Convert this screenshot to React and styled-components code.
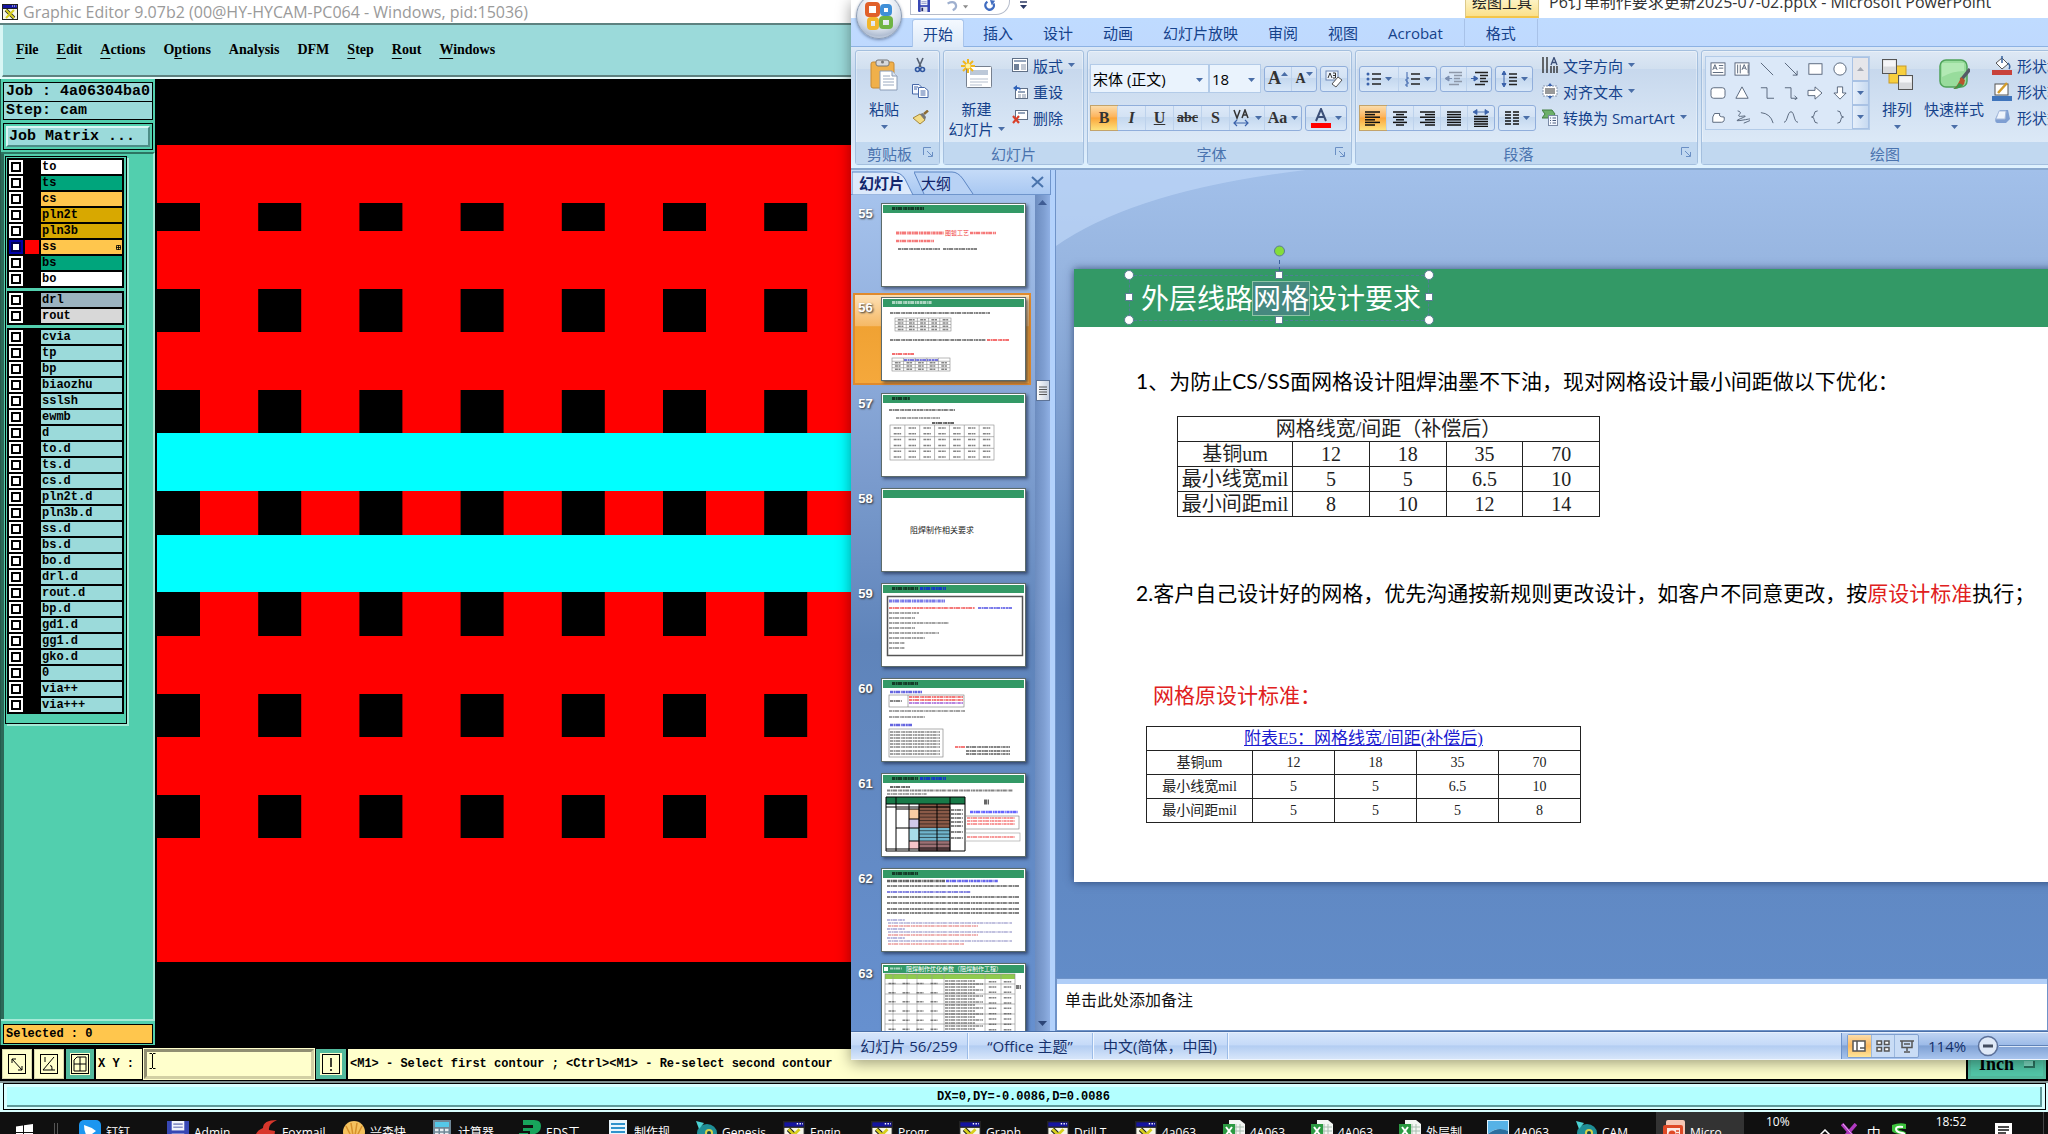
import React from "react";
import styled, { createGlobalStyle, css } from "styled-components";

const UI = `"Open Sans", "Noto Sans CJK SC", sans-serif`;
const MONO = `"Liberation Mono", monospace`;
const SLIDE = `"Liberation Sans Narrow", Lato, "Noto Sans CJK SC", sans-serif`;

const Global = createGlobalStyle`
  * { box-sizing: border-box; }
  html, body, #root { height: 100%; }
  body { margin: 0; overflow: hidden; background: #000; font-family: ${UI}; }
  button, input, select { font: inherit; color: inherit; margin: 0; padding: 0; border: 0; border-radius: 0; background: none; }
  svg { display: block; flex: none; }
`;

/* ---------- desktop ---------- */

const Desktop = styled.div`
  position: relative;
  display: flex;
  flex-direction: column;
  height: 100vh;
  overflow: hidden;
`;

/* ---------- graphic editor ---------- */

const Editor = styled.main`
  flex: 1;
  min-height: 0;
  display: flex;
  flex-direction: column;
`;
const EditorTitle = styled.header`
  height: 23px;
  display: flex;
  align-items: center;
  gap: 5px;
  padding-left: 2px;
  background: #fff;
  color: #9a9a9a;
  font-size: 16px;
  line-height: 22px;
  white-space: nowrap;
`;
const MenuBar = styled.nav`
  height: 56px;
  padding: 2px 0 2px 2px;
  background: linear-gradient(#5e8280 2px, #d8f6f4 2px, #d8f6f4 54px, #e6fbfa 54px);
`;
const MenuInner = styled.div`
  height: 100%;
  display: flex;
  align-items: center;
  gap: 18px;
  padding: 0 0 0 13px;
  background: #9bdada;
  border: solid #5e8280;
  border-width: 0 0 2px 0;
  border-left: 1px solid #d8f6f4;
`;
const MenuItem = styled.button`
  font: bold 14px/20px "Liberation Serif", serif;
  color: #000;
  u { text-underline-offset: 4px; }
`;
const Middle = styled.div`
  flex: 1;
  min-height: 0;
  display: flex;
  background: #000;
`;
const SidePanel = styled.aside`
  width: 157px;
  display: flex;
  flex-direction: column;
  background: #52cfae;
  border-left: 1px solid #245a4c;
  border-right: 2px solid #000;
  font-family: ${MONO};
  font-weight: bold;
  margin-bottom: 3px;
`;
const JobInfo = styled.dl`
  margin: 3px 2px 0 2px;
  border: 1px solid #000;
  background: #9bdada;
  font-size: 15px;
  line-height: 18px;
`;
const JobLine = styled.div`
  display: flex;
  height: 18px;
  padding-left: 2px;
  white-space: pre;
  & + & { border-top: 1px solid #000; }
  dt, dd { margin: 0; }
`;
const MatrixFrame = styled.div`
  margin: 3px 2px 0;
  padding: 2px;
  border: 1px solid #000;
`;
const MatrixButton = styled.button`
  display: block;
  width: 100%;
  height: 21px;
  padding-left: 1px;
  text-align: left;
  background: #9bdada;
  font-size: 15px;
  line-height: 17px;
  border: 2px solid;
  border-color: #d8f6f4 #4d8d87 #4d8d87 #d8f6f4;
`;
const LayerArea = styled.div`
  flex: 1;
  margin-top: 2px;
  padding: 2px 0 0 4px;
  border-top: 2px solid #2c7562;
  border-right: 2px solid #a5ead7;
  border-bottom: 2px solid #a5ead7;
  background: linear-gradient(90deg, #2c6858 3px, #52cfae 3px);
`;
const LayerFrame = styled.div`
  width: 122px;
  display: flex;
  flex-direction: column;
  gap: 3px;
  padding: 1px 2px 9px 1px;
  background: #52cfae;
  border: 1px solid #000;
  box-shadow: 2px 2px 0 #a5ead7;
`;
const LayerGroup = styled.ul`
  list-style: none;
  margin: 0;
  padding: 2px;
  display: flex;
  flex-direction: column;
  gap: 2px;
  background: #000;
`;
const LayerRow = styled.li`
  display: grid;
  grid-template-columns: 14px 14px 1fr;
  gap: 2px;
  height: 14px;
`;
const LayerCheck = styled.input`
  appearance: none;
  width: 14px;
  height: 14px;
  border: 2px solid #fff;
  background: #fff;
  box-shadow: inset 0 0 0 2px #000;
  &:checked { border-color: #0000a8; box-shadow: inset 0 0 0 2px #000050; }
`;
const Swatch = styled.span`
  background: ${(p) => p.$color || "#000"};
`;
const LayerName = styled.label`
  display: flex;
  justify-content: space-between;
  align-items: center;
  padding: 0 1px;
  background: ${(p) => p.$color};
  font-size: 12px;
  line-height: 14px;
  color: #000;
`;
const Selected = styled.output`
  margin: 3px 2px 1px;
  height: 20px;
  padding-left: 2px;
  border: 1px solid #000;
  background: #ffc64d;
  font-size: 12px;
  line-height: 18px;
`;
const Canvas = styled.svg`
  flex: 1;
  min-width: 0;
  height: 100%;
`;
const CommandBar = styled.div`
  height: 33px;
  display: flex;
  gap: 2px;
  padding: 1px 2px 2px;
  background: #000;
  font: bold 12px/30px ${MONO};
  color: #000;
`;
const ToolButton = styled.button`
  width: ${(p) => p.$w || 30}px;
  display: grid;
  place-items: center;
  background: #ffffcc;
  border: 1px solid #d8d8ac;
  ${(p) => p.$green && css`border: 4px solid #52b99c;`}
`;
const CoordLabel = styled.label`
  width: 46px;
  padding-left: 2px;
  background: #ffffcc;
  white-space: pre;
`;
const CoordField = styled.div`
  position: relative;
  display: flex;
  svg { position: absolute; left: 5px; top: 4px; pointer-events: none; }
`;
const CoordInput = styled.input`
  width: 170px;
  background: #ffffcc;
  padding: 0 4px;
  border: 3px solid;
  border-color: #918f72 #d2d0a4 #d2d0a4 #918f72;
  outline: 1px solid #ffffcc;
`;
const Message = styled.p`
  flex: 1;
  margin: 0;
  padding-left: 2px;
  background: #ffffcc;
`;
const UnitButton = styled.button`
  width: 78px;
  display: flex;
  align-items: center;
  justify-content: center;
  gap: 10px;
  background: #52c7a8;
  border: 2px solid;
  border-color: #a5ead7 #2c7562 #2c7562 #a5ead7;
  outline: 3px solid #52b99c;
  outline-offset: -3px;
  font: bold 18px/20px "Liberation Serif", serif;
`;
const CoordStatus = styled.div`
  height: 31px;
  padding: 2px 2px 2px 3px;
  background: linear-gradient(#7f9090 2px, #d8ffff 2px);
  div {
    height: 27px;
    border: 1px solid #000;
    padding: 3px 3px 2px;
    background: #d8ffff;
  }
  p {
    margin: 0;
    height: 20px;
    border-bottom: 2px solid #5f9a9a;
    border-right: 2px solid #5f9a9a;
    background: #b3ffff;
    text-align: center;
    font: bold 12px/20px ${MONO};
  }
`;

/* ---------- presentation window ---------- */

const PptWindow = styled.section`
  position: absolute;
  left: 851px;
  right: 0;
  top: 0;
  bottom: 74px;
  display: flex;
  flex-direction: column;
  overflow: hidden;
  background: #bfdbff;
  color: #15428b;
  font-size: 15px;
`;
const WindowShadow = styled.div`
  position: absolute;
  left: 851px;
  right: 0;
  top: 0;
  bottom: 74px;
  box-shadow: 0 3px 14px rgba(0, 0, 0, 0.4);
`;
const PptTitle = styled.header`
  height: 18px;
  display: flex;
  align-items: flex-end;
  background: #fff;
  overflow: hidden;
  white-space: nowrap;
  color: #222;
`;
const QuickAccess = styled.div`
  width: 100px;
  height: 15px;
  margin: 0 0 3px 59px;
  padding: 0 12px 0 7px;
  display: flex;
  align-items: flex-start;
  justify-content: space-between;
  border: 1px solid #b5bccb;
  border-top: 0;
  border-radius: 0 0 14px 0;
  align-self: flex-start;
`;
const IconButton = styled.button`
  display: grid;
  place-items: center;
`;
const ContextTitle = styled.span`
  width: 74px;
  height: 18px;
  margin-left: auto;
  display: flex;
  align-items: flex-end;
  justify-content: center;
  line-height: 28px;
  background: linear-gradient(#fdf3c4, #fbe08a);
  border: solid #dcc98a;
  border-width: 0 1px;
  border-bottom: 2px solid #f3c54a;
`;
const WindowCaption = styled.h1`
  width: 509px;
  margin: 0;
  padding-left: 10px;
  font-size: 16px;
  font-weight: 400;
  line-height: 32px;
  color: #333;
`;
const TabRow = styled.nav`
  height: 29px;
  padding: 1px 0 0 61px;
  display: flex;
  background: linear-gradient(#bfdbff, #bfd9fe);
  border-bottom: 1px solid #8db2e3;
`;
const RibbonTab = styled.button`
  padding: 0 15px;
  margin-bottom: -1px;
  line-height: 26px;
  white-space: nowrap;
  ${(p) =>
    p.$active &&
    css`
      padding: 0 10px;
      margin-right: 4px;
      background: linear-gradient(#f4f9ff, #dde9f7);
      border: 1px solid #a9c5ec;
      border-bottom: 0;
      border-radius: 3px 3px 0 0;
    `}
  ${(p) =>
    p.$context &&
    css`
      margin-left: 6px;
      width: 74px;
      padding: 0;
      border: solid #a8c2e8;
      border-width: 0 1px;
    `}
`;
const OfficeOrb = styled.button`
  position: absolute;
  left: 5px;
  top: -7px;
  width: 46px;
  height: 46px;
  display: grid;
  place-items: center;
  border-radius: 50%;
  border: 1px solid #8c9db5;
  background: radial-gradient(circle at 50% 30%, #fff 20%, #d5dde9 60%, #b2bfd3 75%, #eef3fa 100%);
  box-shadow: 0 1px 3px rgba(40, 60, 100, 0.5);
`;
const Ribbon = styled.div`
  height: 123px;
  display: flex;
  gap: 3px;
  padding: 3px 4px 3px;
  background: linear-gradient(#dbe7f6, #c9dbf0 20%, #d9e8f8 80%, #dff2ff);
  border-bottom: 2px solid #8aa9cf;
  overflow: hidden;
`;
const Group = styled.section`
  flex: none;
  width: ${(p) => p.$w}px;
  display: flex;
  flex-direction: column;
  border: 1px solid #a4bfde;
  border-radius: 3px;
  background: linear-gradient(#dee8f5 0, #d1dfef 18px, #c7d8ed 18px, #dce9f7 92px);
  box-shadow: inset 0 0 0 1px rgba(255, 255, 255, 0.35);
`;
const GroupBody = styled.div`
  flex: 1;
  display: flex;
  padding: ${(p) => p.$pad || "0"};
  gap: ${(p) => p.$gap || 0}px;
`;
const GroupLabel = styled.h2`
  position: relative;
  margin: 0;
  height: 22px;
  padding-right: ${(p) => (p.$launch ? 16 : 0)}px;
  text-align: center;
  font-size: 15px;
  font-weight: 400;
  line-height: 24px;
  color: #4a73ae;
  background: #c1d8f0;
  svg { position: absolute; right: 5px; top: 5px; }
`;
const BigButton = styled.button`
  flex: none;
  width: ${(p) => p.$w}px;
  display: flex;
  flex-direction: column;
  align-items: center;
  padding-top: 8px;
  line-height: 20px;
  white-space: nowrap;
  svg { margin-bottom: 8px; }
  svg + span { min-height: 20px; }
`;
const CaretSlot = styled.span`
  height: 16px;
  display: grid;
  place-items: center;
  svg { margin: 0; }
`;
const InlineCaret = styled.span`
  display: flex;
  align-items: center;
  gap: 4px;
  svg { margin: 0; }
`;
const Stack = styled.div`
  display: flex;
  flex-direction: column;
  align-items: flex-start;
  padding-top: 1px;
`;
const SmallButton = styled.button`
  height: 26px;
  display: flex;
  align-items: center;
  gap: 5px;
  white-space: nowrap;
`;
const Rows = styled.div`
  display: flex;
  flex-direction: column;
  gap: 12px;
  padding-top: 13px;
`;
const Row = styled.div`
  display: flex;
  align-items: center;
  height: 29px;
  gap: 3px;
  & + & { height: 26px; }
`;
const Combo = styled.div`
  position: relative;
  width: ${(p) => p.$w}px;
  height: 29px;
  border: 1px solid #b3cbe8;
  background: #eaf3fd;
  & + & { margin-left: -3px; }
  select {
    appearance: none;
    width: 100%;
    height: 100%;
    padding-left: 2px;
    font-size: 15px;
    color: #000;
  }
  svg { position: absolute; right: 5px; top: 13px; pointer-events: none; }
`;
const Cluster = styled.div`
  display: flex;
  height: 26px;
  border: 1px solid #90aedb;
  border-radius: 3px;
  background: linear-gradient(#dde9f8 0, #d3e2f4 45%, #c3d7ee 45%, #d8e7f8);
`;
const Tool = styled.button`
  width: ${(p) => p.$w}px;
  display: flex;
  align-items: center;
  justify-content: center;
  gap: ${(p) => (p.$tight ? 0 : 4)}px;
  color: #333;
  font-family: "Liberation Serif", serif;
  font-weight: bold;
  font-size: ${(p) => p.$size || 16}px;
  ${(p) => p.$tight && css`svg { align-self: flex-start; margin-top: 5px; }`}
  & + & { border-left: 1px solid #bdd2ec; }
  ${(p) =>
    p.$on &&
    css`
      background: linear-gradient(#fbdcaa, #fdb45c 45%, #fba63c 50%, #fde27c);
      outline: 1px solid #c2a36b;
    `}
`;
const Gallery = styled.div`
  flex: none;
  width: 165px;
  height: 74px;
  margin: 5px 8px 0 3px;
  display: flex;
  border: 1px solid #b3cbe8;
  background: #dbe8f8;
`;
const ShapeGrid = styled.div`
  flex: 1;
  display: grid;
  grid-template-columns: repeat(6, 1fr);
  place-items: center;
`;
const GalleryNav = styled.div`
  width: 17px;
  display: grid;
  button {
    display: grid;
    place-items: center;
    border: 1px solid #a9c2e4;
    background: linear-gradient(90deg, #e6effa, #c7daf1);
  }
  button:first-child { background: #e6e6ea; }
`;
const Work = styled.div`
  flex: 1;
  min-height: 0;
  display: flex;
  border-bottom: 1px solid #4a6fa8;
`;
const SlidePanel = styled.aside`
  width: 200px;
  display: flex;
  flex-direction: column;
  background: linear-gradient(#a9c6ef 0, #8eacdb 22%, #5f84ba 55%, #6690cf 100%);
`;
const PanelTabs = styled.div`
  height: 25px;
  display: flex;
  align-items: center;
  padding: 0 6px 0 8px;
  background: linear-gradient(#c5dbf8, #a9c8f2);
  border-bottom: 1px solid #6f95cc;
  border-right: 1px solid #6f95cc;
`;
const PanelTab = styled.button`
  position: relative;
  height: 25px;
  line-height: 26px;
  margin-right: 17px;
  color: #10246b;
  font-weight: ${(p) => (p.$active ? "bold" : "normal")};
  svg { position: absolute; left: -7px; top: 0; z-index: 0; }
  span { position: relative; }
`;
const PanelClose = styled.button`
  margin-left: auto;
  display: grid;
`;
const PanelBody = styled.div`
  flex: 1;
  min-height: 0;
  display: flex;
`;
const ThumbList = styled.ol`
  list-style: none;
  flex: 1;
  margin: 0;
  padding: 3px 0 0 2px;
  overflow: hidden;
`;
const ThumbItem = styled.li`
  height: 95px;
  display: flex;
  padding: 4px;
  gap: 8px;
  width: 178px;
  border: 1px solid transparent;
  ${(p) =>
    p.$active &&
    css`
      height: 92px;
      margin-bottom: 3px;
      border: 2px solid #e08a2c;
      padding: 2px 3px;
      background: linear-gradient(#fde0b4, #f5b966 35%, #f0a233 36%, #f5a83c);
    `}
`;
const ThumbNo = styled.span`
  width: 19px;
  text-align: center;
  color: #fff;
  font: bold 13px/22px "Liberation Sans", sans-serif;
  text-shadow: 1px 1px 2px #333;
`;
const Thumb = styled.svg`
  width: 145px;
  height: 84px;
  background: #fff;
  border: 1px solid #5c6b6b;
  box-shadow: 2px 2px 3px rgba(20, 30, 60, 0.6);
  font-family: "Noto Sans CJK SC", sans-serif;
`;
const Scroll = styled.div`
  width: 16px;
  display: flex;
  flex-direction: column;
  align-items: center;
  background: linear-gradient(90deg, #6c8cbf, #7f9fd2 60%, #8fb0e4);
  border-right: 1px solid #b5d2fa;
  padding: 5px 0;
`;
const ScrollThumb = styled.div`
  width: 14px;
  height: 21px;
  margin-top: 175px;
  margin-bottom: auto;
  display: grid;
  place-items: center;
  border: 1px solid #5d7396;
  background: linear-gradient(90deg, #fafafa, #c9d3e2);
`;
const Splitter = styled.div`
  width: 5px;
  background: #b3d2fc;
  border-right: 1px solid #6f93c8;
`;
const EditPane = styled.div`
  flex: 1;
  min-width: 0;
  display: flex;
  flex-direction: column;
`;
const Stage = styled.div`
  position: relative;
  flex: 1;
  min-height: 0;
  padding: 99px 0 0 18px;
  overflow: hidden;
  background: linear-gradient(#a2c0ea 0, #97b5e0 12%, #5b80b8 55%, #628cc8 100%);
`;
const Swoosh = styled.svg`
  position: absolute;
  left: 0;
  top: 0;
`;
const Slide = styled.article`
  position: relative;
  width: 1090px;
  height: 613px;
  background: #fff;
  color: #000;
  font-family: ${SLIDE};
  font-size: 21px;
  line-height: 30px;
  box-shadow: 0 0 8px rgba(20, 40, 80, 0.7);
  white-space: nowrap;
`;
const SlideHead = styled.div`
  height: 58px;
  padding: 6px 0 0 55px;
  background: #339966;
`;
const TitleBox = styled.h3`
  position: relative;
  width: 300px;
  height: 46px;
  margin: 0;
  padding: 6px 0 0 11px;
  border: 1px dashed #4f7f96;
  color: #fff;
  font-weight: 400;
  font-size: 28px;
  line-height: 33px;
  mark {
    color: #fff;
    background: #46887f;
    outline: 1px solid #8fc4a6;
    display: inline-block;
  }
`;
const Handles = styled.svg`
  position: absolute;
  left: -6px;
  top: -36px;
  overflow: visible;
`;
const SlideText = styled.p`
  margin: 0;
  padding-left: ${(p) => p.$indent}px;
  margin-top: ${(p) => p.$top}px;
  color: ${(p) => (p.$red ? "#e02020" : "#000")};
  em { font-style: normal; color: #e02020; }
`;
const SpecTable = styled.table`
  table-layout: fixed;
  border-collapse: collapse;
  margin: ${(p) => p.$m};
  width: ${(p) => p.$w}px;
  font-family: "Liberation Serif", "Noto Sans CJK SC", serif;
  font-size: ${(p) => p.$size}px;
  color: #222;
  th, td {
    border: 1px solid #222;
    padding: 0;
    height: ${(p) => p.$row}px;
    line-height: ${(p) => p.$row - 1}px;
    text-align: center;
    font-weight: 400;
  }
  thead th { font-size: ${(p) => p.$head}px; }
  a { color: #1a1ad0; }
`;
const FirstCol = styled.col`
  width: ${(p) => p.$w}px;
`;
const Notes = styled.label`
  height: 53px;
  padding: 0;
  display: block;
  border-top: 6px solid #b0cef8;
  outline: 1px solid #6f93c8;
  outline-offset: -1px;
  background: #fff;
  color: #000;
  input { width: 100%; height: 32px; padding-left: 9px; font-size: 16px; }
  input::placeholder { color: #111; opacity: 1; }
`;
const StatusBar = styled.footer`
  height: 28px;
  display: flex;
  align-items: center;
  border-top: 1px solid #e6effc;
  border-bottom: 1px solid #eef4fd;
  background: linear-gradient(#d7e6fb, #c5daf8 45%, #b3cdf2 50%, #d7e6fa);
  color: #15306b;
  white-space: nowrap;
`;
const StatusCell = styled.span`
  height: 26px;
  width: ${(p) => p.$w}px;
  text-align: center;
  line-height: 26px;
  border-right: 1px solid #9bbce8;
  box-shadow: 1px 0 0 #f0f6ff;
`;
const StatusRight = styled.div`
  width: 207px;
  height: 26px;
  margin-left: auto;
  padding-left: 5px;
  display: flex;
  align-items: center;
  gap: 9px;
  overflow: hidden;
  border-left: 1px solid #6d92c9;
  background: linear-gradient(#bed3f2, #9dbbe8 45%, #7fa1d4 50%, #a9c5ee);
`;
const ViewButtons = styled.div`
  flex: none;
  display: flex;
  width: 72px;
  height: 24px;
  border: 1px solid #7f9fcf;
  border-radius: 2px;
  background: #c9dcf5;
  button {
    flex: 1;
    display: grid;
    place-items: center;
  }
  button + button { border-left: 1px solid #9cb8de; }
  button:first-child { background: linear-gradient(#fbdcaa, #fdb95c 50%, #fee69a); }
`;
const ZoomText = styled.span`
  width: 40px;
  flex: none;
`;
const ZoomControl = styled.div`
  display: flex;
  align-items: center;
  flex: none;
`;
const ZoomRange = styled.input`
  appearance: none;
  width: 200px;
  height: 2px;
  background: #5f82b8;
  border-bottom: 1px solid #dbe7f8;
  &::-webkit-slider-thumb { appearance: none; width: 8px; height: 14px; background: #dce8f8; }
`;

/* ---------- taskbar ---------- */

const Taskbar = styled.nav`
  position: relative;
  height: 22px;
  display: flex;
  overflow: hidden;
  background: #101010;
  color: #fff;
  font-size: 12px;
  white-space: nowrap;
`;
const StartButton = styled.button`
  width: 54px;
  height: 40px;
  padding-left: 16px;
  display: flex;
  align-items: center;
`;
const Grip = styled.span`
  width: 18px;
  height: 40px;
  display: flex;
  gap: 2px;
  align-items: center;
  &::before, &::after { content: ""; width: 1px; height: 18px; background: #555; }
`;
const Task = styled.button`
  flex: none;
  width: 88px;
  height: 40px;
  padding-left: 7px;
  display: flex;
  align-items: center;
  gap: 5px;
  background: ${(p) => (p.$active ? "#333" : "transparent")};
`;
const Tray = styled.div`
  margin-left: auto;
  width: 278px;
  height: 40px;
  display: flex;
  align-items: center;
  gap: 29px;
  border-right: 1px solid #444;
  margin-right: 4px;
`;
const TrayText = styled.span`
  height: 40px;
  line-height: 20px;
`;
const TrayIcons = styled.div`
  display: flex;
  align-items: center;
  gap: 10px;
  span { font-size: 14px; }
`;

/* ---------- icons ---------- */

const Caret = ({ up, c = "#4a6ea8" }) => (
  <svg width="7" height="4" viewBox="0 0 7 4"><path d={up ? "M0 4L3.500 0L7 4Z" : "M0 0H7L3.500 4Z"} fill={c} /></svg>
);
const Launcher = () => (
  <svg width="11" height="11" viewBox="0 0 11 11" fill="none" stroke="#6a8fc4">
    <path d="M.5 8V.5H8" /><path d="M4 4L9 9M9.500 5v4.500H5" />
  </svg>
);
const XWin = ({ s = 16 }) => (
  <svg width={s} height={s} viewBox="0 0 16 16">
    <rect width="16" height="16" fill="#222" /><rect x="1" y="1" width="14" height="3" fill="#1414a0" />
    <path d="M10 2h1M12 2h1M14 2h.5" stroke="#fff" />
    <rect x="1" y="5" width="14" height="10" fill="#f6f6e8" />
    <path d="M4 6L12 14" stroke="#222" strokeWidth="3.500" /><path d="M4 6L12 14M12 6L4 14" stroke="#d8cf1e" strokeWidth="2" />
  </svg>
);
const Lines = ({ rows, w = 16, c = "#111" }) => (
  <svg width={w} height="16" viewBox={`0 0 ${w} 16`} stroke={c} strokeWidth="1.500">
    {rows.map(([x1, x2], i) => <path key={i} d={`M${x1} ${2 + i * 2.6}H${x2}`} />)}
  </svg>
);
const PasteIcon = () => (
  <svg width="28" height="32" viewBox="0 0 28 32">
    <rect x="1" y="3" width="23" height="26" rx="2" fill="#f0b04a" stroke="#c88a32" />
    <rect x="6" y="1" width="13" height="6" rx="2" fill="#d7d9dc" stroke="#777" /><circle cx="12.500" cy="3" r="1.500" fill="#777" />
    <path d="M10 12h12l5 5v14H10Z" fill="#fff" stroke="#8a9bb5" /><path d="M22 12v5h5" fill="#dbe4f0" stroke="#8a9bb5" />
    <path d="M13 17h7M13 20h11M13 23h11M13 26h11" stroke="#9aa9c0" />
  </svg>
);
const CutIcon = () => (
  <svg width="16" height="16" viewBox="-1 0 16 16" fill="none">
    <path d="M4 1L8 10M10 1L6 10" stroke="#555f70" strokeWidth="1.600" />
    <circle cx="4.500" cy="12.500" r="2" stroke="#2f56a0" strokeWidth="1.600" /><circle cx="9.500" cy="12.500" r="2" stroke="#2f56a0" strokeWidth="1.600" />
  </svg>
);
const CopyIcon = () => (
  <svg width="17" height="14" viewBox="0 0 17 14" stroke="#4668a8">
    <path d="M.5.5H7l3 3V10H.5Z" fill="#f4f8ff" /><path d="M6.500 3.500h6l3.500 3V13.500H6.500Z" fill="#fff" />
    <path d="M2 3h4M2 5h3M8.500 7h5M8.500 9h5M8.500 11h5" />
  </svg>
);
const BrushIcon = () => (
  <svg width="18" height="15" viewBox="0 0 18 15">
    <path d="M1 8l7-4 5 6-5 4Z" fill="#f3dc86" stroke="#a4873a" /><path d="M8 4l3-1 3 4-1 3Z" fill="#777" /><path d="M12 4l4-3.500" stroke="#8c6b32" strokeWidth="2.400" />
  </svg>
);
const NewSlideIcon = () => (
  <svg width="32" height="32" viewBox="0 0 32 32">
    <rect x="5.500" y="7.500" width="25" height="21" rx="1" fill="#fff" stroke="#76808f" />
    <rect x="9" y="11" width="18" height="5" fill="#bcc8d8" /><path d="M9 20h18M9 23h18M9 26h12" stroke="#b5bfce" />
    <path d="M7 0v14M0 7h14M2 2l10 10M12 2L2 12" stroke="#f0b71e" strokeWidth="2" /><circle cx="7" cy="7" r="2.500" fill="#fff3a0" />
  </svg>
);
const LayoutIcon = () => (
  <svg width="16" height="14" viewBox="0 0 16 14"><rect x=".5" y=".5" width="15" height="13" fill="#fff" stroke="#5f6f86" /><rect x="2" y="2" width="12" height="2" fill="#93a3ba" /><rect x="2" y="6" width="5" height="6" fill="#6f8098" /><path d="M9 7h5M9 9h5M9 11h5" stroke="#8492a8" /></svg>
);
const ResetIcon = () => (
  <svg width="16" height="15" viewBox="0 0 16 15"><rect x="3.500" y="4.500" width="12" height="10" fill="#fff" stroke="#5f6f86" /><path d="M6 8h7" stroke="#93a3ba" strokeWidth="2" /><path d="M6 11h3M10 11h4M6 13h3M10 13h4" stroke="#8492a8" /><path d="M1 4l4-3v2c4 0 4 2 3 4-.5-2-1-2-3-2v2Z" fill="#2f62b8" /></svg>
);
const DeleteIcon = () => (
  <svg width="16" height="14" viewBox="0 0 16 14"><rect x="3.500" y=".5" width="12" height="9" fill="#fff" stroke="#5f6f86" /><path d="M6 3h7" stroke="#93a3ba" strokeWidth="2" /><path d="M1 6l6 7M7 6l-6 7" stroke="#d9402a" strokeWidth="2.200" /></svg>
);
const Bullets = ({ num }) => (
  <svg width="15" height="16" viewBox="0 0 15 16">
    {[3, 8, 13].map((y, i) => (
      <g key={y}>
        {num ? <path d={i === 0 ? "M2 1v4" : `M1 ${y - 2}h2v2h-2v2h2`} stroke="#3b62aa" fill="none" /> : <circle cx="2" cy={y} r="1.500" fill="#3b62aa" />}
        <path d={`M6 ${y}H15`} stroke="#222" strokeWidth="1.500" />
      </g>
    ))}
  </svg>
);
const Indent = ({ dir }) => (
  <svg width="17" height="16" viewBox="0 0 17 16" stroke={dir ? "#222" : "#8d97a8"} strokeWidth="1.500">
    <path d="M4 1.500H17M9 4.500h8M9 7.500h6M9 10.500h8M4 13.500H14" />
    {dir ? <path d="M0 7.500h3V5l4 2.500L3 10V7.500" fill="#3b62aa" stroke="#3b62aa" strokeWidth="1" /> : <path d="M7 7.500H4V5L0 7.500 4 10V7.500" fill="#7c8fb0" stroke="#7c8fb0" strokeWidth="1" />}
  </svg>
);
const Spacing = () => (
  <svg width="16" height="18" viewBox="0 0 16 18"><path d="M3 2v14M3 1L1 4.500h4ZM3 17l-2-3.500h4Z" stroke="#3b62aa" fill="#3b62aa" /><path d="M8 4h8M8 7.500h8M8 11h8M8 14.500h8" stroke="#222" strokeWidth="1.300" /></svg>
);
const Columns = () => (
  <svg width="14" height="14" viewBox="0 0 14 14" stroke="#111" strokeWidth="1.500">{[1, 4, 7, 10, 13].map((y) => <path key={y} d={`M0 ${y}h6M8 ${y}h6`} />)}</svg>
);
const Distribute = () => (
  <svg width="16" height="18" viewBox="0 0 16 18"><path d="M2 3h12M0 3l4-2.500v5ZM16 3l-4-2.500v5Z" stroke="#3b62aa" fill="#3b62aa" strokeWidth=".8" /><path d="M1 7.500h14M1 10h14M1 12.500h14M1 15h14M1 17.300h14" stroke="#111" strokeWidth="1.300" /></svg>
);
const TextDir = () => (
  <svg width="16" height="16" viewBox="0 0 16 16" stroke="#222" strokeWidth="1.300" fill="none"><path d="M1 0v16M5 0v16M9 9v7M12 9v7M15 9v7" /><path d="M9 8l3-7.500L15 8M10 5.500h4" stroke="#3b4f78" /></svg>
);
const AlignText = () => (
  <svg width="16" height="16" viewBox="0 0 16 16"><rect x="1" y="3" width="14" height="10" fill="#fff" stroke="#8695ad" strokeDasharray="2 1" /><path d="M3 6h10M3 8h10M3 10h10" stroke="#333" /><path d="M8 0l-2.500 3h5ZM8 16l-2.500-3h5Z" fill="#3b62aa" /></svg>
);
const SmartArt = () => (
  <svg width="16" height="17" viewBox="0 0 16 17"><path d="M0 1h10l3 4-3 4H0l3-4Z" fill="#6db06a" stroke="#447f42" /><rect x="6.500" y="6.500" width="9" height="10" fill="#f4f8ff" stroke="#7a8aa5" /><path d="M8 9h1M10.500 9H14M8 11.500h1M10.500 11.500H14M8 14h1M10.500 14H14" stroke="#4a5c7c" /></svg>
);
const Arrange = () => (
  <svg width="31" height="32" viewBox="0 0 31 32"><rect x="7" y="7" width="17" height="17" fill="#f7cf3e" stroke="#c99b28" /><rect x=".5" y=".5" width="14" height="14" fill="#d9dadd" stroke="#555" /><rect x="1.500" y="1.500" width="12" height="6" fill="#f5f5f7" /><rect x="16.500" y="16.500" width="14" height="14" fill="#d9dadd" stroke="#555" /><rect x="17.500" y="17.500" width="12" height="6" fill="#f5f5f7" /></svg>
);
const QuickStyle = () => (
  <svg width="31" height="32" viewBox="0 0 31 32"><rect x="1" y="1" width="27" height="27" rx="6" fill="#98dc9c" stroke="#4fa35a" strokeWidth="1.500" /><path d="M3 4h22v8q-12 0-22 6Z" fill="#bdeebf" opacity=".7" /><path d="M31 10l-9 11" stroke="#555c66" strokeWidth="3.500" /><path d="M22 18l4 3q0 8-12 9 5-3 8-12Z" fill="#b9542c" /><path d="M20 24l4 2q-3 4-10 4 4-2 6-6Z" fill="#3c9a4a" /></svg>
);
const FillIcon = ({ kind }) => (
  <svg width="20" height="19" viewBox="0 0 20 19">
    {kind === 0 && <><path d="M4 7l6-5 6 6-6 5Z" fill="#fff" stroke="#555" /><path d="M10 0v7M16 7q3 3 1 6" stroke="#38639f" strokeWidth="1.500" fill="none" /><rect y="14" width="20" height="5" fill="#c8423b" /></>}
    {kind === 1 && <><rect x="3" y="2" width="13" height="11" fill="#fff" stroke="#555" /><path d="M6 11l9-10" stroke="#d39c2b" strokeWidth="2.500" /><rect y="14" width="20" height="5" fill="#3f74bb" /></>}
    {kind === 2 && <><path d="M8 2h8l2 9-4 4H5Q2 14 4 9Z" fill="#7f9fd2" /><path d="M7 3h7l-1 8H4Z" fill="#eef4fc" stroke="#a9bcdc" /></>}
  </svg>
);
const shapes = [
  <g key="a"><rect x="1" y="1" width="16" height="14" fill="#fff" /><path d="M3 9l2.500-6L8 9M4 7h3M10 4h5M10 7h5M3 12h12" /></g>,
  <g key="b"><rect x="1" y="1" width="16" height="14" fill="#fff" /><path d="M9 9l2.500-6L14 9M10 7h3M4 3v10M7 3v10M16 3v10" /></g>,
  <path key="c" d="M2 1l14 14" />,
  <path key="d" d="M2 1l14 14M16 10v5h-5" />,
  <rect key="e" x="2" y="2" width="15" height="12" fill="#fff" />,
  <circle key="f" cx="9" cy="8" r="7" fill="#fff" />,
  <rect key="g" x="1" y="2" width="16" height="12" rx="3" fill="#fff" />,
  <path key="h" d="M9 1l7 13H2Z" fill="#fff" />,
  <path key="i" d="M2 2h7v12h8" />,
  <path key="j" d="M2 2h7v12h7M13 11l3 3-3 2" />,
  <path key="k" d="M1 5h8V1l8 7-8 7v-4H1Z" fill="#fff" />,
  <path key="l" d="M6 1v7H2l7 7 7-7h-4V1Z" fill="#fff" />,
  <path key="m" d="M5 4h6q-2 4 5 4 1 6-3 6H3V8Z" fill="#fff" />,
  <path key="n" d="M4 1q5 1 2 4t4 2-3 3 6 1-2 4" />,
  <path key="o" d="M2 3q11 1 14 12" />,
  <path key="p" d="M1 14C5 14 5 2 9 2s3 12 8 12" />,
  <path key="q" d="M12 1q-4 0-4 4 0 3-3 3 3 0 3 3 0 4 4 4" />,
  <path key="r" d="M6 1q4 0 4 4 0 3 3 3-3 0-3 3 0 4-4 4" />,
];
const OfficeLogo = () => (
  <svg width="30" height="32" viewBox="0 0 30 32" fill="none" strokeWidth="4">
    <rect x="3" y="4" width="11" height="11" rx="2" stroke="#e0602a" /><rect x="18" y="6" width="8" height="8" rx="2" stroke="#3f8fd8" />
    <rect x="5" y="19" width="8" height="9" rx="2" stroke="#f2b62c" /><rect x="17" y="18" width="10" height="9" rx="2" stroke="#6fb444" />
  </svg>
);
const Floppy = ({ s = 14 }) => (
  <svg width={s} height={s} viewBox="0 0 14 14"><path d="M0 0h14v14H1L0 13Z" fill="#3747b4" /><rect x="3" width="8" height="6" fill="#f2f4fb" /><path d="M4 2h6M4 4h6" stroke="#8b93c8" /><rect x="3" y="8" width="8" height="6" fill="#dfe2f0" /><rect x="4" y="9" width="2" height="4" fill="#222a66" /></svg>
);

const TaskIcon = ({ kind }) => {
  if (kind === "x") return <XWin s={22} />;
  if (kind === "floppy") return <Floppy s={22} />;
  return (
    <svg width="22" height="24" viewBox="0 0 22 24">
      {kind === "ding" && <><rect width="22" height="24" rx="5" fill="#1d96f0" /><path d="M5 5q7 2 12 6l-4 3 2 1-6 7 1-5-2-1q-3-4-3-11Z" fill="#fff" /></>}
      {kind === "fox" && <path d="M22 0Q8 0 8 8-2 12 1 22q4-8 9-8l1 6 8-1 1-8-6-1Q13 4 22 0Z" fill="#d8372c" />}
      {kind === "shell" && <><circle cx="11" cy="12" r="11" fill="#f5c25e" /><path d="M11 22L3 6M11 22L8 3M11 22l3-19M11 22l8-16" stroke="#d6902b" strokeWidth="1.500" /></>}
      {kind === "calc" && <><rect x="2" width="18" height="24" fill="#6f8796" /><rect x="4" y="2" width="14" height="5" fill="#54c8e8" /><path d="M4 10h14M4 14h14M4 18h14" stroke="#e8eef2" strokeWidth="2.500" strokeDasharray="3.500 1.500" /></>}
      {kind === "eds" && <path d="M4 0h11q7 0 7 6t-6 8h-5v-3H4V8h10V5H4ZM0 13h9v3H0ZM3 18h17v3H3Z" fill="#18a45c" />}
      {kind === "doc" && <><rect x="2" width="18" height="24" fill="#e9f6fd" /><path d="M4 4h14M4 8h14M4 12h14M4 16h14M4 20h10" stroke="#2f93cc" strokeWidth="2" /></>}
      {kind === "gen" && <><ellipse cx="12" cy="13" rx="10" ry="9" fill="#1f8e96" /><circle cx="14" cy="13" r="4" fill="#d6d34a" /><circle cx="14" cy="13" r="2" fill="#12464e" /><path d="M1 1l8 2-5 6Z" fill="#4bd2d2" /></>}
      {kind === "xls" && <><path d="M6 0h11l5 4v20H6Z" fill="#f3f6f3" /><path d="M9 7h12M9 11h12M9 15h12M13 4v18M17 4v18" stroke="#a9bfb0" /><rect y="4" width="12" height="14" fill="#2b9a42" /><path d="M3 7l6 8M9 7l-6 8" stroke="#fff" strokeWidth="2" /></>}
      {kind === "img" && <><rect width="22" height="24" fill="#dff2fc" /><path d="M1 1h20v10Q10 6 1 14Z" fill="#56b2e6" /><path d="M1 14q10-8 20-3v12H1Z" fill="#2c6f9f" /></>}
      {kind === "ppt" && <><rect x="3" width="19" height="24" rx="2" fill="#f6c7b4" /><rect y="5" width="20" height="19" rx="2" fill="#df4a26" /><rect x="4" y="8" width="13" height="11" fill="#fbeae4" /><circle cx="9" cy="14" r="3.500" fill="#df4a26" /><path d="M13 11h3M13 14h3" stroke="#df4a26" strokeWidth="1.500" /></>}
    </svg>
  );
};

/* ---------- data ---------- */

const TEAL = "#9bdada";
const layerGroups = [
  [["to", "#fff"], ["ts", "#00a57c"], ["cs", "#ffc64d"], ["pln2t", "#d8a800"], ["pln3b", "#d8a800"], ["ss", "#ffc64d", true], ["bs", "#00a57c"], ["bo", "#fff"]],
  [["drl", "#9bb3c0"], ["rout", "#d8d8d8"]],
  "cvia tp bp biaozhu sslsh ewmb d to.d ts.d cs.d pln2t.d pln3b.d ss.d bs.d bo.d drl.d rout.d bp.d gd1.d gg1.d gko.d 0 via++ via+++".split(" ").map((n) => [n, TEAL]),
];
const menus = [["File", 0], ["Edit", 0], ["Actions", 0], ["Options", 1], ["Analysis"], ["DFM"], ["Step", 0], ["Rout", 0], ["Windows", 0]];
const ribbonTabs = ["开始", "插入", "设计", "动画", "幻灯片放映", "审阅", "视图", "Acrobat"];
const tasks = [
  ["ding", "钉钉"], ["floppy", "Admin"], ["fox", "Foxmail"], ["shell", "兴森快"], ["calc", "计算器"], ["eds", "EDS工"], ["doc", "制作规"], ["gen", "Genesis"],
  ["x", "Engin"], ["x", "Progr"], ["x", "Graph"], ["x", "Drill T"], ["x", "4a063"], ["xls", "4A063"], ["xls", "4A063"], ["xls", "外层制"], ["img", "4A063"], ["gen", "CAM"], ["ppt", "Micro"],
];
const holeRows = [[124, 28], [210, 43], [311, 43], [412, 44], [513, 44], [615, 43], [716, 43]];

/* ---------- thumbnails ---------- */

const Scribble = ({ x, y, w, c = "#333", h = 2, d = "3 .6 2 .4 4 .8 1 .4" }) => (
  <path d={`M${x} ${y}h${w}`} stroke={c} strokeWidth={h} strokeDasharray={d} opacity=".6" />
);
const Grid = ({ x, y, w, h, cols, rows, c = "#888" }) => (
  <g stroke={c} strokeWidth=".6" fill="none">
    <rect x={x} y={y} width={w} height={h} />
    {Array.from({ length: rows - 1 }, (_, i) => <path key={`r${i}`} d={`M${x} ${y + ((i + 1) * h) / rows}h${w}`} />)}
    {Array.from({ length: cols - 1 }, (_, i) => <path key={`c${i}`} d={`M${x + ((i + 1) * w) / cols} ${y}v${h}`} />)}
  </g>
);
const Cells = ({ x, y, w, h, cols, rows, c }) => (
  <g>
    {Array.from({ length: rows * cols }, (_, i) => (
      <Scribble key={i} c={c} h={1.5} x={x + ((i % cols) * w) / cols + w / cols / 4} y={y + (Math.floor(i / cols) + 0.5) * (h / rows)} w={w / cols / 2} />
    ))}
  </g>
);
const thumbs = {
  55: <><Scribble x={10} y={4.5} w={32} c="#000" h={3} /><Scribble x={14} y={29} w={48} c="#f02020" h={3} /><text x="63" y="31" fontSize="6" fill="#f04040">图镀工艺</text><Scribble x={88} y={29} w={26} c="#f02020" h={2.5} /><Scribble x={14} y={37} w={38} c="#f02020" h={2.5} /><Scribble x={16} y={45} w={42} /><Scribble x={61} y={45} w={34} /></>,
  56: <><Scribble x={10} y={4.5} w={40} c="#fff" h={3} /><Scribble x={8} y={15} w={100} /><Grid x={13} y={20} w={56} h={13} cols={5} rows={4} /><Cells x={13} y={20} w={56} h={13} cols={5} rows={4} /><Scribble x={8} y={42} w={96} /><Scribble x={105} y={42} w={22} c="#e11" /><Scribble x={10} y={56} w={22} c="#e11" /><Grid x={10} y={60} w={58} h={13} cols={5} rows={4} /><Scribble x={22} y={62} w={34} c="#22c" /><Cells x={10} y={63} w={58} h={10} cols={5} rows={3} /></>,
  57: <><Scribble x={10} y={4.5} w={18} c="#000" h={3} /><Scribble x={7} y={16} w={66} /><Scribble x={14} y={24} w={44} h={1.5} /><Scribble x={50} y={29} w={22} c="#000" /><Grid x={8} y={31} w={104} h={35} cols={7} rows={3} /><Cells x={8} y={31} w={104} h={35} cols={7} rows={6} /></>,
  58: <text x="28" y="44" fontSize="8" fill="#222">阻焊制作相关要求</text>,
  59: <><Scribble x={10} y={4.5} w={26} c="#000" h={3} /><Scribble x={38} y={4.5} w={26} c="#00f" h={3} /><rect x="5.500" y="12.500" width="135" height="59" fill="none" stroke="#555" strokeWidth="1.500" /><Scribble x={7} y={17} w={56} c="#22d" h={3} /><Scribble x={7} y={24} w={86} c="#e22" /><Scribble x={96} y={24} w={34} c="#22d" />{[30, 26, 60, 26, 50, 36, 16, 16].map((w, i) => <Scribble key={i} x={7} y={29 + i * 5} w={w} h={1.5} />)}</>,
  60: <><Scribble x={10} y={4.5} w={26} c="#000" h={3} /><Scribble x={8} y={13} w={32} c="#00c" h={2.5} /><rect x="7" y="16" width="75" height="12" fill="none" stroke="#777" strokeWidth=".6" /><path d="M26 16v12" stroke="#777" strokeWidth=".6" /><Scribble x={8} y={22} w={12} />{[18, 21, 24].map((y) => <Scribble key={y} x={27} y={y} w={54} c={y === 24 ? "#83c" : "#e22"} />)}<Scribble x={7} y={32} w={76} h={1.5} /><Scribble x={7} y={38} w={36} h={1.5} /><Scribble x={8} y={46} w={22} c="#00c" h={2.5} /><rect x="7" y="50" width="54" height="28" fill="none" stroke="#777" strokeWidth=".6" />{[53, 56, 59, 62, 65, 68, 72, 75].map((y) => <Scribble key={y} x={8} y={y} w={50} h={1.5} />)}<Scribble x={73} y={68} w={10} c="#e22" />{[68, 72, 75].map((y) => <Scribble key={y} x={84} y={y} w={44} />)}</>,
  61: <><Scribble x={10} y={4.5} w={26} c="#000" h={3} /><Scribble x={38} y={4.5} w={26} c="#00f" h={3} /><Scribble x={8} y={13} w={20} c="#000" /><Scribble x={5} y={16.5} w={126} /><Scribble x={5} y={20} w={40} h={1.5} /><rect x="4" y="23" width="79" height="7" fill="#187a48" /><rect x="4" y="30" width="79" height="47" fill="#fff" /><rect x="27" y="35" width="10" height="10" fill="#f8cda4" /><rect x="27" y="45" width="10" height="9" fill="#cfc8ea" /><rect x="27" y="54" width="10" height="13" fill="#a8dbe8" /><rect x="27" y="67" width="10" height="8" fill="#f4c4c8" /><rect x="37" y="30" width="31" height="24" fill="#8b5a48" /><rect x="37" y="54" width="31" height="13" fill="#6fb4cc" /><rect x="37" y="67" width="31" height="10" fill="#9c7074" /><Grid x={37} y={33} w={31} h={44} cols={1} rows={13} c="#111" /><path d="M4 30h79M4 33h64M14 35h23M14 54h23M27 45h10M27 67h10M4 75h64M14 23v54M27 30v47M37 30v47M55 30v47M68 23v54" stroke="#000" /><path d="M4 23h79v54h-79z" fill="none" stroke="#000" />{[36, 40, 44, 48, 52, 58, 64].map((y) => <Scribble key={y} x={69} y={y} w={12} />)}<Scribble x={102} y={28} w={5} c="#000" h={5} /><Scribble x={88} y={38} w={48} c="#00f" h={2.5} /><rect x="83" y="42" width="54" height="13" fill="none" stroke="#777" strokeWidth=".6" />{[44, 47, 50].map((y) => <Scribble key={y} x={85} y={y} w={48} c="#e22" h={1.5} />)}<rect x="83" y="59" width="55" height="8" fill="none" stroke="#999" strokeWidth=".6" /><Scribble x={85} y={63} w={48} c="#e22" h={1.5} /></>,
  62: <><Scribble x={10} y={4.5} w={26} c="#000" h={3} /><Scribble x={5} y={12} w={58} c="#000" h={2.5} /><Scribble x={64} y={12} w={52} c="#00d" h={2.5} /><Scribble x={5} y={17} w={132} /><Scribble x={5} y={23} w={84} c="#33c" />{[28, 34, 40, 44].map((y) => <Scribble key={y} x={5} y={y} w={132} />)}{[51, 60, 69].map((y) => <Scribble key={y} x={5} y={y} w={18} c="#66b" h={1.5} />)}{[[54, 124, "#77b"], [57, 90, "#d55"], [63, 124, "#77b"], [66, 90, "#d55"], [72, 124, "#77b"], [75, 76, "#d55"]].map(([y, w, c]) => <Scribble key={y} x={6} y={y} w={w} c={c} h={1.5} />)}</>,
  63: <><path d="M2 3h4v4H2Z" fill="#fff" /><Scribble x={8} y={4.5} w={12} c="#fff" /><text x="24" y="7" fontSize="6" fill="#fff">阻焊制作优化参数（阻焊制作工程）</text><rect x="3" y="10" width="130" height="5" fill="#8fca4e" /><Grid x={3} y={10} w={130} h={90} cols={1} rows={9} /><path d="M11 10v80M25 10v80M35 10v80M50 10v80M62 10v80M103 10v80M119 10v80" stroke="#999" strokeWidth=".6" /><Cells x={3} y={15} w={56} h={64} cols={4} rows={7} /><Cells x={103} y={15} w={30} h={64} cols={2} rows={12} />{Array.from({ length: 20 }, (_, i) => <Scribble key={i} x={63} y={17 + i * 3} w={i % 2 ? 38 : 30} h={1.5} />)}<Scribble x={134} y={23} w={5} h={4} c="#222" /></>,
};

/* ---------- parts ---------- */

const RibbonGroup = ({ w, label, launch, pad, gap, children }) => (
  <Group $w={w}>
    <GroupBody $pad={pad} $gap={gap}>{children}</GroupBody>
    <GroupLabel $launch={launch}>{label}{launch && <Launcher />}</GroupLabel>
  </Group>
);

const Spec = ({ caption, rows, first, ...look }) => (
  <SpecTable {...look}>
    <colgroup><FirstCol $w={first} /><col /><col /><col /><col /></colgroup>
    <thead><tr><th colSpan={5}>{caption}</th></tr></thead>
    <tbody>{rows.map(([h, ...c]) => <tr key={h}><th>{h}</th>{c.map((v, i) => <td key={i}>{v}</td>)}</tr>)}</tbody>
  </SpecTable>
);

function GraphicEditor() {
  return (
    <Editor>
      <EditorTitle><XWin /><span>Graphic Editor 9.07b2 (00@HY-HYCAM-PC064 - Windows, pid:15036)</span></EditorTitle>
      <MenuBar>
        <MenuInner>
          {menus.map(([m, u]) => (
            <MenuItem key={m}>{u === undefined ? m : <>{m.slice(0, u)}<u>{m[u]}</u>{m.slice(u + 1)}</>}</MenuItem>
          ))}
        </MenuInner>
      </MenuBar>
      <Middle>
        <SidePanel>
          <JobInfo>
            <JobLine><dt>{"Job : "}</dt><dd>4a06304ba0</dd></JobLine>
            <JobLine><dt>{"Step: "}</dt><dd>cam</dd></JobLine>
          </JobInfo>
          <MatrixFrame><MatrixButton>Job Matrix ...</MatrixButton></MatrixFrame>
          <LayerArea>
            <LayerFrame>
              {layerGroups.map((g, gi) => (
                <LayerGroup key={gi}>
                  {g.map(([name, color, on]) => (
                    <LayerRow key={name}>
                      <LayerCheck type="checkbox" id={`layer-${name}`} defaultChecked={!!on} />
                      <Swatch $color={on && "#f00"} />
                      <LayerName htmlFor={`layer-${name}`} $color={color}>
                        {name}
                        {on && <svg width="5" height="5" viewBox="0 0 5 5"><path d="M.5.5h4v4h-4ZM2.500 0v5M0 2.500h5" fill="none" stroke="#000" strokeWidth=".8" /></svg>}
                      </LayerName>
                    </LayerRow>
                  ))}
                </LayerGroup>
              ))}
            </LayerFrame>
          </LayerArea>
          <Selected>Selected : 0</Selected>
        </SidePanel>
        <Canvas aria-label="Layer graphics">
          <rect y="66" width="100%" height="817" fill="#f00" />
          {holeRows.map(([y, h]) =>
            [0, 1, 2, 3, 4, 5, 6].map((c) => (
              <rect key={`${y}-${c}`} x={c * 101.2} y={y} width="43" height={h} fill="#000" />
            ))
          )}
          <rect y="354" width="100%" height="58" fill="#0ff" />
          <rect y="456" width="100%" height="57" fill="#0ff" />
        </Canvas>
      </Middle>
      <CommandBar>
        <ToolButton aria-label="Zoom window"><svg width="20" height="22" viewBox="0 0 20 22" fill="none" stroke="#000"><rect x="1.500" y="1.500" width="17" height="19" /><path d="M5 6l10 11M5 10V6h4M15 13v4h-4" /></svg></ToolButton>
        <ToolButton aria-label="Angle"><svg width="20" height="22" viewBox="0 0 20 22" fill="none" stroke="#000"><rect x="1.500" y="1.500" width="17" height="19" /><path d="M15 4L4 17h12M6 4v5M11 13q2-2 2 4" /></svg></ToolButton>
        <ToolButton $green $w={28} aria-label="Grid"><svg width="20" height="22" viewBox="0 0 20 22" fill="#ffffcc" stroke="#000"><rect x="1.500" y="1.500" width="17" height="19" /><path d="M4 7l3-3h9v14H4ZM10 4v14M4 11h12" /></svg></ToolButton>
        <CoordLabel htmlFor="xy">X Y :</CoordLabel>
        <CoordField>
          <CoordInput id="xy" defaultValue="" />
          <svg width="7" height="16" viewBox="0 0 7 16" fill="none" stroke="#000"><path d="M.5.5H3M4 .5h2.500M3.500 1v14M.5 15.500H3M4 15.500h2.500" /></svg>
        </CoordField>
        <ToolButton $green aria-label="Alert"><svg width="20" height="22" viewBox="0 0 20 22" fill="#ffffcc" stroke="#000"><rect x="1.500" y="1.500" width="17" height="19" /><path d="M10 5v9M10 16v2" strokeWidth="1.500" /></svg></ToolButton>
        <Message>{"<M1> - Select first contour ; <Ctrl><M1> - Re-select second contour"}</Message>
        <UnitButton>Inch<svg width="11" height="7" viewBox="0 0 11 7"><rect width="11" height="7" fill="#2c7562" /><rect width="9" height="5" fill="#7fdcc4" /></svg></UnitButton>
      </CommandBar>
      <CoordStatus><div><p>DX=0,DY=-0.0086,D=0.0086</p></div></CoordStatus>
    </Editor>
  );
}

function RibbonBar() {
  return (
    <Ribbon>
      <RibbonGroup w={85} label="剪贴板" launch>
        <BigButton $w={56}><PasteIcon /><span>粘贴</span><CaretSlot><Caret /></CaretSlot></BigButton>
        <Stack><SmallButton aria-label="剪切"><CutIcon /></SmallButton><SmallButton aria-label="复制"><CopyIcon /></SmallButton><SmallButton aria-label="格式刷"><BrushIcon /></SmallButton></Stack>
      </RibbonGroup>
      <RibbonGroup w={141} label="幻灯片" gap={3}>
        <BigButton $w={65}><NewSlideIcon /><span>新建</span><InlineCaret>幻灯片<Caret /></InlineCaret></BigButton>
        <Stack>
          <SmallButton><LayoutIcon />版式<Caret /></SmallButton>
          <SmallButton><ResetIcon />重设</SmallButton>
          <SmallButton><DeleteIcon />删除</SmallButton>
        </Stack>
      </RibbonGroup>
      <RibbonGroup w={265} label="字体" launch pad="0 2px">
        <Rows>
          <Row>
            <Combo $w={119}><select aria-label="字体" defaultValue="f"><option value="f">宋体 (正文)</option></select><Caret /></Combo>
            <Combo $w={52}><select aria-label="字号" defaultValue="18"><option>18</option></select><Caret /></Combo>
            <Cluster><Tool $w={26} $size={18} $tight>A<Caret up /></Tool><Tool $w={25} $size={14} $tight>A<Caret /></Tool></Cluster>
            <Cluster><Tool $w={26} aria-label="清除格式"><svg width="18" height="18" viewBox="0 0 18 18"><rect x="1" y="1" width="12" height="9" fill="#eef4fd" stroke="#6d86b3" /><path d="M3 8l2-5 2 5M8 3h2.500v5H8M8 5.500h2" stroke="#333" fill="none" /><path d="M7 14l6-7 4 3-6 7Z" fill="#fff" stroke="#555" /></svg></Tool></Cluster>
          </Row>
          <Row>
            <Cluster>
              <Tool $w={26} $on>B</Tool>
              <Tool $w={28}><i>I</i></Tool>
              <Tool $w={28}><u>U</u></Tool>
              <Tool $w={28} $size={14}><s>abc</s></Tool>
              <Tool $w={28}>S</Tool>
              <Tool $w={35} aria-label="字符间距"><svg width="18" height="18" viewBox="0 0 18 18" fill="none"><path d="M1 1l3 8 3-8M9 9l3-8 3 8M10 6h4" stroke="#333" strokeWidth="1.500" /><path d="M1 14h14M4 11l-3 3 3 3M12 11l3 3-3 3" stroke="#3b62aa" strokeWidth="1.200" /></svg><Caret /></Tool>
              <Tool $w={37}>Aa<Caret /></Tool>
            </Cluster>
            <Cluster><Tool $w={40} aria-label="字体颜色"><svg width="20" height="20" viewBox="0 0 20 20"><path d="M5 13l5-12 5 12M7 9h6" fill="none" stroke="#3b4f78" strokeWidth="2" /><rect y="15" width="20" height="5" fill="#f00" /></svg><Caret /></Tool></Cluster>
          </Row>
        </Rows>
      </RibbonGroup>
      <RibbonGroup w={343} label="段落" launch pad="0 3px" gap={6}>
        <Rows>
          <Row>
            <Cluster><Tool $w={38} aria-label="项目符号"><Bullets /><Caret /></Tool><Tool $w={38} aria-label="编号"><Bullets num /><Caret /></Tool></Cluster>
            <Cluster><Tool $w={25} aria-label="降低级别"><Indent /></Tool><Tool $w={25} aria-label="提高级别"><Indent dir /></Tool></Cluster>
            <Cluster><Tool $w={36} aria-label="行距"><Spacing /><Caret /></Tool></Cluster>
          </Row>
          <Row>
            <Cluster>
              <Tool $w={26} $on aria-label="左对齐"><Lines rows={[[0, 15], [0, 10], [0, 15], [0, 10], [0, 15], [0, 10]]} /></Tool>
              <Tool $w={27} aria-label="居中"><Lines rows={[[1, 15], [4, 12], [1, 15], [4, 12], [1, 15], [4, 12]]} /></Tool>
              <Tool $w={27} aria-label="右对齐"><Lines rows={[[1, 16], [6, 16], [1, 16], [6, 16], [1, 16], [6, 16]]} /></Tool>
              <Tool $w={27} aria-label="两端对齐"><Lines rows={[[1, 15], [1, 15], [1, 15], [1, 15], [1, 15], [1, 15]]} /></Tool>
              <Tool $w={27} aria-label="分散对齐"><Distribute /></Tool>
            </Cluster>
            <Cluster><Tool $w={36} aria-label="分栏"><Columns /><Caret /></Tool></Cluster>
          </Row>
        </Rows>
        <Stack>
          <SmallButton><TextDir />文字方向<Caret /></SmallButton>
          <SmallButton><AlignText />对齐文本<Caret /></SmallButton>
          <SmallButton><SmartArt />转换为 SmartArt<Caret /></SmallButton>
        </Stack>
      </RibbonGroup>
      <RibbonGroup w={368} label="绘图">
        <Gallery>
          <ShapeGrid>
            {shapes.map((s, i) => <svg key={i} width="16" height="14" viewBox="0 0 18 16" fill="none" stroke="#4c5a70">{s}</svg>)}
          </ShapeGrid>
          <GalleryNav><button aria-label="上一行"><Caret up c="#a5a9b3" /></button><button aria-label="下一行"><Caret /></button><button aria-label="其他"><Caret /></button></GalleryNav>
        </Gallery>
        <BigButton $w={38}><Arrange /><span>排列</span><CaretSlot><Caret /></CaretSlot></BigButton>
        <BigButton $w={76}><QuickStyle /><span>快速样式</span><CaretSlot><Caret /></CaretSlot></BigButton>
        <Stack>
          {["形状填充", "形状轮廓", "形状效果"].map((t, i) => <SmallButton key={t}><FillIcon kind={i} />{t}<Caret /></SmallButton>)}
        </Stack>
      </RibbonGroup>
    </Ribbon>
  );
}

function SlideView() {
  return (
    <Stage>
      <Swoosh width="620" height="99" viewBox="0 0 620 99"><path d="M0 0H250Q80 20 0 76Z" fill="#c3dafa" opacity=".6" /></Swoosh>
      <Slide>
        <SlideHead>
          <TitleBox>
            外层线路<mark>网格</mark>设计要求
            <Handles width="312" height="90" viewBox="0 0 312 90" fill="#fff" stroke="#5b7c92">
              <path d="M155.500 20v14" strokeDasharray="4 3" stroke="#3b5f9b" /><circle cx="155.500" cy="11" r="5" fill="#84dd3a" />
              {[5, 305].map((x) => [35, 80].map((y) => <circle key={`${x}${y}`} cx={x} cy={y} r="4.500" />))}
              {[[155, 35], [155, 80], [5, 57], [305, 57]].map(([x, y]) => <rect key={`${x}${y}`} x={x - 3.5} y={y - 3.5} width="7" height="7" />)}
            </Handles>
          </TitleBox>
        </SlideHead>
        <SlideText $indent={62} $top={39}>1、为防止CS/SS面网格设计阻焊油墨不下油，现对网格设计最小间距做以下优化：</SlideText>
        <Spec $m="20px 0 0 103px" $w={423} first={115} $row={25} $size={20} $head={20} caption="网格线宽/间距（补偿后）"
          rows={[["基铜um", 12, 18, 35, 70], ["最小线宽mil", 5, 5, "6.5", 10], ["最小间距mil", 8, 10, 12, 14]]} />
        <SlideText $indent={62} $top={61}>2.客户自己设计好的网格，优先沟通按新规则更改设计，如客户不同意更改，按<em>原设计标准</em>执行；</SlideText>
        <SlideText $indent={79} $top={72} $red>网格原设计标准：</SlideText>
        <Spec $m="16px 0 0 72px" $w={435} first={106} $row={24} $size={14} $head={17} caption={<a href="#e5">附表E5：网格线宽/间距(补偿后)</a>}
          rows={[["基铜um", 12, 18, 35, 70], ["最小线宽mil", 5, 5, "6.5", 10], ["最小间距mil", 5, 5, 5, 8]]} />
      </Slide>
    </Stage>
  );
}

function Presentation() {
  return (
    <PptWindow>
      <PptTitle>
        <QuickAccess>
          <IconButton aria-label="保存"><Floppy s={12} /></IconButton>
          <IconButton aria-label="撤消"><svg width="26" height="12" viewBox="0 0 26 14"><path d="M2 4q9-4 10 3 0 3-4 5" fill="none" stroke="#9fb0cf" strokeWidth="2.500" /><path d="M20 6h6l-3 4Z" fill="#8b8b8b" /></svg></IconButton>
          <IconButton aria-label="重复"><svg width="14" height="12" viewBox="0 0 14 14"><path d="M4 2a5 5 0 1 0 7 2" fill="none" stroke="#3f6cc0" strokeWidth="2.800" /><path d="M7 0l6 1-4 5Z" fill="#3f6cc0" /></svg></IconButton>
        </QuickAccess>
        <IconButton aria-label="自定义"><svg width="26" height="18" viewBox="0 0 26 18"><path d="M10 2h7" stroke="#2c3a66" strokeWidth="1.500" /><path d="M10 5h7l-3.500 4Z" fill="#2c3a66" /></svg></IconButton>
        <ContextTitle>绘图工具</ContextTitle>
        <WindowCaption>P6订单制作要求更新2025-07-02.pptx - Microsoft PowerPoint</WindowCaption>
      </PptTitle>
      <TabRow>
        {ribbonTabs.map((t, i) => <RibbonTab key={t} $active={i === 0}>{t}</RibbonTab>)}
        <RibbonTab $context>格式</RibbonTab>
      </TabRow>
      <OfficeOrb aria-label="Office"><OfficeLogo /></OfficeOrb>
      <RibbonBar />
      <Work>
        <SlidePanel>
          <PanelTabs>
            <PanelTab $active>
              <svg width="70" height="25" viewBox="0 0 70 25"><path d="M0 25V2H40Q49 2 53 9l8 16Z" fill="#dce9fb" stroke="#5d86c4" /></svg><span>幻灯片</span>
            </PanelTab>
            <PanelTab>
              <svg width="70" height="25" viewBox="0 0 70 25"><path d="M10 24L0 2H38Q44 2 49 9l10 15" fill="#b9d2f5" stroke="#5d86c4" /></svg><span>大纲</span>
            </PanelTab>
            <PanelClose aria-label="关闭"><svg width="13" height="12" viewBox="0 0 13 12"><path d="M1 1l11 10M12 1L1 11" stroke="#4a74ad" strokeWidth="2" /></svg></PanelClose>
          </PanelTabs>
          <PanelBody>
            <ThumbList>
              {Object.entries(thumbs).map(([n, art]) => (
                <ThumbItem key={n} $active={n === "56"}>
                  <ThumbNo>{n}</ThumbNo>
                  <Thumb viewBox="0 0 143 82"><rect x="1" y="1" width="141" height="8" fill="#339966" />{art}</Thumb>
                </ThumbItem>
              ))}
            </ThumbList>
            <Scroll>
              <svg width="9" height="5" viewBox="0 0 9 5"><path d="M0 5L4.500 0 9 5Z" fill="#3f5c94" /></svg>
              <ScrollThumb><svg width="8" height="9" viewBox="0 0 8 9"><path d="M0 1h8M0 3.500h8M0 6h8M0 8.500h8" stroke="#555" /></svg></ScrollThumb>
              <svg width="9" height="5" viewBox="0 0 9 5"><path d="M0 0H9L4.500 5Z" fill="#2c4577" /></svg>
            </Scroll>
          </PanelBody>
        </SlidePanel>
        <Splitter />
        <EditPane>
          <SlideView />
          <Notes><input placeholder="单击此处添加备注" aria-label="备注" /></Notes>
        </EditPane>
      </Work>
      <StatusBar>
        <StatusCell $w={117}>幻灯片 56/259</StatusCell>
        <StatusCell $w={125}>“Office 主题”</StatusCell>
        <StatusCell $w={135}>中文(简体，中国)</StatusCell>
        <StatusRight>
          <ViewButtons>
            <button aria-label="普通视图"><svg width="14" height="12" viewBox="0 0 14 12"><rect x="1" y="1" width="12" height="10" fill="#fff" stroke="#555" strokeWidth="1.500" /><path d="M5 1v10M8 8h5" stroke="#555" strokeWidth="1.500" /></svg></button>
            <button aria-label="幻灯片浏览"><svg width="14" height="12" viewBox="0 0 14 12" fill="#fff" stroke="#555" strokeWidth="1.500"><path d="M1 1h4.500v3.500H1ZM8.500 1H13v3.500H8.500ZM1 7.500h4.500V11H1ZM8.500 7.500H13V11H8.500Z" /></svg></button>
            <button aria-label="幻灯片放映"><svg width="14" height="13" viewBox="0 0 14 13" fill="none" stroke="#555" strokeWidth="1.500"><path d="M0 1h14M2 1v6.500h10V1M7 7.500V11M4 12h6M4 4h6" /></svg></button>
          </ViewButtons>
          <ZoomText>114%</ZoomText>
          <ZoomControl>
            <IconButton aria-label="缩小"><svg width="22" height="22" viewBox="0 0 22 22"><circle cx="11" cy="11" r="9.500" fill="#dfe9f7" stroke="#5b7099" strokeWidth="1.500" /><rect x="6" y="9.500" width="10" height="3" fill="#444e60" /></svg></IconButton>
            <ZoomRange type="range" min="10" max="200" defaultValue="114" aria-label="缩放" />
          </ZoomControl>
        </StatusRight>
      </StatusBar>
    </PptWindow>
  );
}

export default function App() {
  return (
    <>
      <Global />
      <Desktop>
        <GraphicEditor />
        <WindowShadow />
        <Presentation />
        <Taskbar>
          <StartButton aria-label="Start"><svg width="17" height="17" viewBox="0 0 17 17" fill="#fff"><path d="M0 2.500l7-1V8H0ZM8 1.300L17 0v8H8ZM0 9h7v6.500l-7-1ZM8 9h9v8l-9-1.300Z" /></svg></StartButton>
          <Grip />
          {tasks.map(([k, t], i) => <Task key={i} $active={k === "ppt"}><TaskIcon kind={k} />{t}</Task>)}
          <Tray>
            <TrayText>10%</TrayText>
            <TrayIcons>
              <svg width="12" height="7" viewBox="0 0 12 7"><path d="M1 6l5-5 5 5" fill="none" stroke="#fff" strokeWidth="1.500" /></svg>
              <svg width="16" height="18" viewBox="0 0 16 18"><path d="M1 1l14 16M15 1L1 17" stroke="#b03ac0" strokeWidth="3.500" /><path d="M2 1l13 15" stroke="#e7b8ee" /></svg>
              <span>中</span>
              <svg width="16" height="18" viewBox="0 0 16 18"><path d="M1 2q8-3 14-1v5q-6-1-8 1 7 1 8 3 0 5-5 7H2v-5q5 0 6-1-6-1-7-3Z" fill="#3cc23c" /><path d="M12 4q-7-1-7 2t6 4-5 4" fill="none" stroke="#fff" strokeWidth="2" /></svg>
            </TrayIcons>
            <TrayText>18:52</TrayText>
            <svg width="17" height="18" viewBox="0 0 17 18"><path d="M0 0h17v14H8l-4 4v-4H0Z" fill="#fff" /><path d="M3 4h11M3 7h11M3 10h8" stroke="#111" strokeWidth="1.500" /></svg>
          </Tray>
        </Taskbar>
      </Desktop>
    </>
  );
}
